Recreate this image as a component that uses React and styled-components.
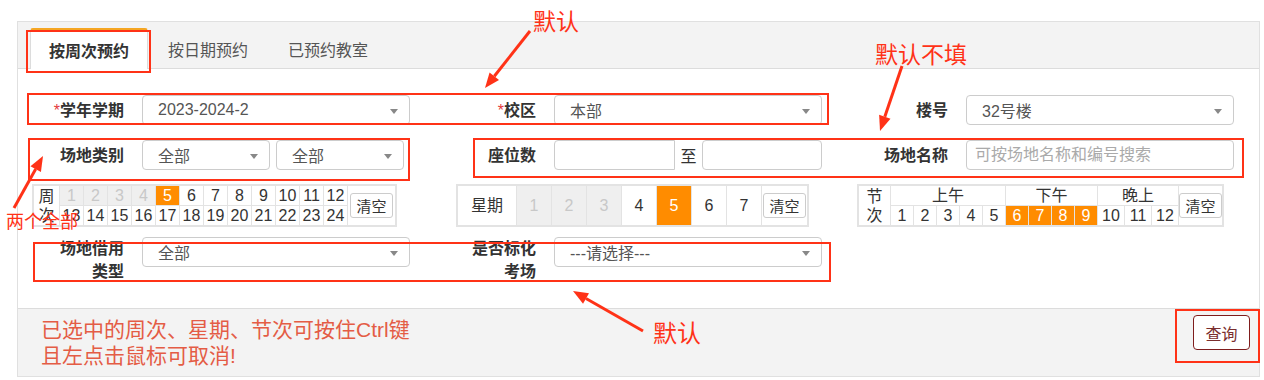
import React from "react";
import styled, { createGlobalStyle } from "styled-components";

const GlobalStyle = createGlobalStyle`
  html, body {
    margin: 0;
    padding: 0;
    background: #fff;
  }
  body {
    font-family: "Liberation Sans", "Noto Sans CJK SC", sans-serif;
    color: #333;
  }
  * {
    box-sizing: border-box;
  }
`;

const Page = styled.div`
  position: relative;
  width: 1264px;
  height: 380px;
  padding: 21px 4px 0 17px;
  overflow: hidden;
`;

const Panel = styled.div`
  width: 1243px;
  border: 1px solid #e0e0e0;
`;

const TabBar = styled.div`
  height: 47px;
  display: flex;
  align-items: flex-end;
  padding-left: 12px;
  background: #f3f3f3;
  border-bottom: 1px solid #dcdcdc;
`;

const Tab = styled.div`
  height: 41px;
  margin-bottom: -1px;
  display: flex;
  align-items: center;
  justify-content: center;
  font-size: 16px;
  color: ${(p) => (p.$active ? "#333" : "#555")};
  font-weight: ${(p) => (p.$active ? 700 : 400)};
  width: ${(p) => (p.$active ? "118px" : "auto")};
  padding: ${(p) => (p.$active ? "0" : "0 20px")};
  background: ${(p) => (p.$active ? "#fff" : "transparent")};
  border: ${(p) => (p.$active ? "1px solid #dcdcdc" : "none")};
  border-top: ${(p) => (p.$active ? "2px solid #f5a623" : "none")};
  border-bottom: none;
  border-radius: 3px 3px 0 0;
`;

const Body = styled.div`
  height: 239px;
  padding: 26px 0 0 14px;
`;

const FieldRow = styled.div`
  display: grid;
  grid-template-columns: repeat(3, 364px);
  column-gap: 48px;
  margin-left: 14px;
  margin-bottom: ${(p) => p.$gap || 0}px;
`;

const Field = styled.div`
  display: grid;
  grid-template-columns: 78px 1fr;
  column-gap: 18px;
  align-items: ${(p) => (p.$tall ? "start" : "center")};
  height: 30px;
`;

const Label = styled.div`
  text-align: right;
  font-size: 16px;
  font-weight: 700;
  line-height: 23px;
  color: #333;
`;

const Star = styled.span`
  color: #e4393c;
  font-weight: 400;
`;

const Select = styled.div`
  width: ${(p) => (p.$w ? `${p.$w}px` : "100%")};
  height: 30px;
  display: flex;
  align-items: center;
  justify-content: space-between;
  padding: 0 11px 0 15px;
  border: 1px solid #ccc;
  border-radius: 4px;
  background: #fff;
  font-size: 16px;
  color: #555;
`;

const Caret = styled.span`
  width: 0;
  height: 0;
  border-left: 4px solid transparent;
  border-right: 4px solid transparent;
  border-top: 5px solid #888;
  margin-top: 2px;
`;

const Controls = styled.div`
  display: flex;
  align-items: center;
  gap: ${(p) => p.$gap || 0}px;
`;

const TextInput = styled.input`
  width: ${(p) => (p.$w ? `${p.$w}px` : "100%")};
  height: 30px;
  padding: 0 8px;
  border: 1px solid #ccc;
  border-radius: ${(p) => (p.$left ? "4px 0 0 4px" : "4px")};
  font-family: inherit;
  font-size: 16px;
  color: #555;
  outline: none;

  &::placeholder {
    color: #aaa;
  }
`;

const RangeSep = styled.span`
  width: 27px;
  text-align: center;
  font-size: 16px;
  color: #333;
`;

const GridRow = styled.div`
  display: flex;
  align-items: flex-start;
  margin: 14px 0 10px;
`;

const Grid = styled.div`
  display: grid;
  grid-template-columns: ${(p) => p.$cols};
  grid-template-rows: ${(p) => p.$rows};
  gap: 1px;
  margin-left: ${(p) => p.$offset || 0}px;
  background: #e3e3e3;
  border: 2px solid #e3e3e3;
`;

const Cell = styled.div`
  display: flex;
  align-items: center;
  justify-content: center;
  text-align: center;
  font-size: 16px;
  line-height: 19px;
  background: ${(p) => (p.$on ? "#ff8c00" : p.$off ? "#efefef" : "#fff")};
  color: ${(p) => (p.$on ? "#fff" : p.$off ? "#c8c8c8" : "#333")};
  grid-row: ${(p) => p.$row || "auto"};
  grid-column: ${(p) => p.$col || "auto"};
`;

const ClearButton = styled.button`
  width: 43px;
  height: 25px;
  padding: 0;
  border: 1px solid #ccc;
  border-radius: 3px;
  background: #fff;
  font-family: inherit;
  font-size: 15px;
  color: #333;
`;

const Footer = styled.div`
  height: 68px;
  display: flex;
  justify-content: space-between;
  align-items: flex-start;
  padding: 8px 9px 0 23px;
  background: #f3f3f3;
  border-top: 1px solid #dcdcdc;
`;

const Note = styled.div`
  font-size: 21px;
  line-height: 26px;
  color: #e45c45;
`;

const QueryButton = styled.button`
  width: 57px;
  height: 35px;
  margin-top: -2px;
  padding: 0;
  border: 1px solid #7f1d1d;
  border-radius: 4px;
  background: #fff;
  font-family: inherit;
  font-size: 16px;
  color: #7a2e2e;
`;

const Mark = styled.div`
  position: absolute;
  left: ${(p) => p.$x}px;
  top: ${(p) => p.$y}px;
  width: ${(p) => p.$w}px;
  height: ${(p) => p.$h}px;
  border: 2px solid #ff3217;
  pointer-events: none;
`;

const Callout = styled.div`
  position: absolute;
  left: ${(p) => p.$x}px;
  top: ${(p) => p.$y}px;
  font-family: "Noto Sans CJK SC", sans-serif;
  font-size: ${(p) => p.$size}px;
  line-height: 1;
  color: #ff3217;
  white-space: nowrap;
  pointer-events: none;
`;

const Overlay = styled.svg`
  position: absolute;
  left: 0;
  top: 0;
  pointer-events: none;
`;

const arrows = [
  [530, 31, 485, 88],
  [902, 66, 880, 131],
  [14, 208, 43, 156],
  [643, 331, 573, 291],
];

const Arrow = ({ a }) => {
  const [x1, y1, x2, y2] = a;
  const len = Math.hypot(x2 - x1, y2 - y1);
  const ux = (x2 - x1) / len;
  const uy = (y2 - y1) / len;
  const bx = x2 - ux * 15;
  const by = y2 - uy * 15;
  const pts = `${x2},${y2} ${bx - uy * 6},${by + ux * 6} ${bx + uy * 6},${by - ux * 6}`;
  return (
    <g>
      <line x1={x1} y1={y1} x2={bx} y2={by} stroke="#ff3217" strokeWidth="3" />
      <polygon points={pts} fill="#ff3217" />
    </g>
  );
};

const weeks1 = Array.from({ length: 12 }, (_, i) => i + 1);
const weeks2 = Array.from({ length: 12 }, (_, i) => i + 13);
const days = [1, 2, 3, 4, 5, 6, 7];
const periods = Array.from({ length: 12 }, (_, i) => i + 1);

export default function App() {
  return (
    <Page>
      <GlobalStyle />
      <Panel>
        <TabBar>
          <Tab $active>按周次预约</Tab>
          <Tab>按日期预约</Tab>
          <Tab>已预约教室</Tab>
        </TabBar>

        <Body>
          <FieldRow $gap={15}>
            <Field>
              <Label>
                <Star>*</Star>学年学期
              </Label>
              <Select>
                2023-2024-2
                <Caret />
              </Select>
            </Field>
            <Field>
              <Label>
                <Star>*</Star>校区
              </Label>
              <Select>
                本部
                <Caret />
              </Select>
            </Field>
            <Field>
              <Label>楼号</Label>
              <Select>
                32号楼
                <Caret />
              </Select>
            </Field>
          </FieldRow>

          <FieldRow>
            <Field>
              <Label>场地类别</Label>
              <Controls $gap={6}>
                <Select $w={128}>
                  全部
                  <Caret />
                </Select>
                <Select $w={128}>
                  全部
                  <Caret />
                </Select>
              </Controls>
            </Field>
            <Field>
              <Label>座位数</Label>
              <Controls>
                <TextInput $w={121} $left />
                <RangeSep>至</RangeSep>
                <TextInput $w={120} />
              </Controls>
            </Field>
            <Field>
              <Label>场地名称</Label>
              <TextInput placeholder="可按场地名称和编号搜索" />
            </Field>
          </FieldRow>

          <GridRow>
            <Grid $cols="25px repeat(12, 23px) 47px" $rows="19px 19px">
              <Cell $row="span 2">周次</Cell>
              {weeks1.map((w) => (
                <Cell key={w} $off={w < 5} $on={w === 5}>
                  {w}
                </Cell>
              ))}
              <Cell $row="span 2">
                <ClearButton>清空</ClearButton>
              </Cell>
              {weeks2.map((w) => (
                <Cell key={w}>{w}</Cell>
              ))}
            </Grid>

            <Grid $cols="58px repeat(7, 34px) 45px" $rows="39px" $offset={59}>
              <Cell>星期</Cell>
              {days.map((d) => (
                <Cell key={d} $off={d < 4} $on={d === 5}>
                  {d}
                </Cell>
              ))}
              <Cell>
                <ClearButton>清空</ClearButton>
              </Cell>
            </Grid>

            <Grid
              $cols="31px repeat(9, 22px) repeat(3, 26px) 43px"
              $rows="19px 19px"
              $offset={48}
            >
              <Cell $row="span 2">节次</Cell>
              <Cell $col="span 5">上午</Cell>
              <Cell $col="span 4">下午</Cell>
              <Cell $col="span 3">晚上</Cell>
              <Cell $row="span 2">
                <ClearButton>清空</ClearButton>
              </Cell>
              {periods.map((n) => (
                <Cell key={n} $on={n >= 6 && n <= 9}>
                  {n}
                </Cell>
              ))}
            </Grid>
          </GridRow>

          <FieldRow>
            <Field $tall>
              <Label>场地借用类型</Label>
              <Select>
                全部
                <Caret />
              </Select>
            </Field>
            <Field $tall>
              <Label>是否标化考场</Label>
              <Select>
                ---请选择---
                <Caret />
              </Select>
            </Field>
          </FieldRow>
        </Body>

        <Footer>
          <Note>
            已选中的周次、星期、节次可按住Ctrl键
            <br />
            且左点击鼠标可取消!
          </Note>
          <QueryButton>查询</QueryButton>
        </Footer>
      </Panel>

      <Mark $x={26} $y={30} $w={125} $h={43} />
      <Mark $x={27} $y={93} $w={802} $h={32} />
      <Mark $x={28} $y={138} $w={382} $h={43} />
      <Mark $x={473} $y={138} $w={771} $h={40} />
      <Mark $x={33} $y={242} $w={798} $h={40} />
      <Mark $x={1175} $y={309} $w={85} $h={54} />

      <Callout $x={533} $y={9} $size={23}>默认</Callout>
      <Callout $x={875} $y={42} $size={23}>默认不填</Callout>
      <Callout $x={6} $y={211} $size={18}>两个全部</Callout>
      <Callout $x={653} $y={320} $size={24}>默认</Callout>

      <Overlay width="1264" height="380" viewBox="0 0 1264 380">
        {arrows.map((a, i) => (
          <Arrow key={i} a={a} />
        ))}
      </Overlay>
    </Page>
  );
}
